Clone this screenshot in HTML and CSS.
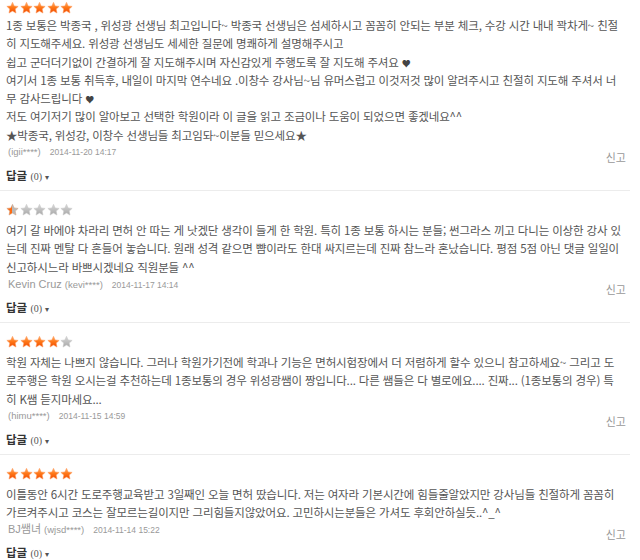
FILE: index.html
```html
<!DOCTYPE html>
<html lang="ko">
<head>
    <meta charset="UTF-8">
    <title>수강후기</title>
    <link rel="stylesheet" href="styles.css">
</head>
<body>
    <svg class="defs" width="0" height="0">
        <defs>
            <linearGradient id="gOn" x1="0" y1="0" x2="0" y2="1">
                <stop offset="0" stop-color="#ffb070"/>
                <stop offset="0.45" stop-color="#ff7a1a"/>
                <stop offset="1" stop-color="#f04a00"/>
            </linearGradient>
            <linearGradient id="gOff" x1="0" y1="0" x2="0" y2="1">
                <stop offset="0" stop-color="#d8d8d8"/>
                <stop offset="1" stop-color="#a8a8a8"/>
            </linearGradient>
            <linearGradient id="gHalf" x1="0" y1="0" x2="1" y2="0">
                <stop offset="0.5" stop-color="#ff6a10"/>
                <stop offset="0.5" stop-color="#b8b8b8"/>
            </linearGradient>
            <symbol id="star" viewBox="0 0 20 20">
                <path d="M10 1.2l2.6 5.6 6.1.7-4.5 4.2 1.2 6.1L10 14.8l-5.4 3 1.2-6.1-4.5-4.2 6.1-.7z" stroke-linejoin="round"/>
            </symbol>
        </defs>
    </svg>

    <div class="review-list">
        <div class="review">
            <div class="stars">
                <svg class="star on"><use href="#star"/></svg><svg class="star on"><use href="#star"/></svg><svg class="star on"><use href="#star"/></svg><svg class="star on"><use href="#star"/></svg><svg class="star on"><use href="#star"/></svg>
            </div>
            <div class="content">1종 보통은 박종국 , 위성광 선생님 최고입니다~ 박종국 선생님은 섬세하시고 꼼꼼히 안되는 부분 체크, 수강 시간 내내 꽉차게~ 친절히 지도해주세요. 위성광 선생님도 세세한 질문에 명쾌하게 설명해주시고<br>쉽고 군더더기없이 간결하게 잘 지도해주시며 자신감있게 주행도록 잘 지도해 주셔요 <span class="heart">♥</span><br>여기서 1종 보통 취득후, 내일이 마지막 연수네요 .이창수 강사님~님 유머스럽고 이것저것 많이 알려주시고 친절히 지도해 주셔서 너무 감사드립니다 <span class="heart">♥</span><br>저도 여기저기 많이 알아보고 선택한 학원이라 이 글을 읽고 조금이나 도움이 되었으면 좋겠네요^^<br>★박종국, 위성강, 이창수 선생님들 최고임돠~이분들 믿으세요★</div>
            <div class="meta-row">
                <div class="meta"><span class="uid">(igii****)</span><span class="date">2014-11-20 14:17</span></div>
                <a class="report">신고</a>
            </div>
            <div class="reply"><b>답글</b> <span class="count">(0)</span> <span class="caret">▾</span></div>
        </div>

        <div class="review">
            <div class="stars">
                <svg class="star half"><use href="#star"/></svg><svg class="star off"><use href="#star"/></svg><svg class="star off"><use href="#star"/></svg><svg class="star off"><use href="#star"/></svg><svg class="star off"><use href="#star"/></svg>
            </div>
            <div class="content">여기 갈 바에야 차라리 면허 안 따는 게 낫겠단 생각이 들게 한 학원. 특히 1종 보통 하시는 분들; 썬그라스 끼고 다니는 이상한 강사 있는데 진짜 멘탈 다 흔들어 놓습니다. 원래 성격 같으면 뺨이라도 한대 싸지르는데 진짜 참느라 혼났습니다. 평점 5점 아닌 댓글 일일이 신고하시느라 바쁘시겠네요 직원분들 ^^</div>
            <div class="meta-row">
                <div class="meta"><span class="name">Kevin Cruz</span><span class="uid">(kevi****)</span><span class="date">2014-11-17 14:14</span></div>
                <a class="report">신고</a>
            </div>
            <div class="reply"><b>답글</b> <span class="count">(0)</span> <span class="caret">▾</span></div>
        </div>

        <div class="review">
            <div class="stars">
                <svg class="star on"><use href="#star"/></svg><svg class="star on"><use href="#star"/></svg><svg class="star on"><use href="#star"/></svg><svg class="star on"><use href="#star"/></svg><svg class="star off"><use href="#star"/></svg>
            </div>
            <div class="content">학원 자체는 나쁘지 않습니다. 그러나 학원가기전에 학과나 기능은 면허시험장에서 더 저렴하게 할수 있으니 참고하세요~ 그리고 도로주행은 학원 오시는걸 추천하는데 1종보통의 경우 위성광쌤이 짱입니다... 다른 쌤들은 다 별로에요.... 진짜... (1종보통의 경우) 특히 K쌤 듣지마세요...</div>
            <div class="meta-row">
                <div class="meta"><span class="uid">(himu****)</span><span class="date">2014-11-15 14:59</span></div>
                <a class="report">신고</a>
            </div>
            <div class="reply"><b>답글</b> <span class="count">(0)</span> <span class="caret">▾</span></div>
        </div>

        <div class="review">
            <div class="stars">
                <svg class="star on"><use href="#star"/></svg><svg class="star on"><use href="#star"/></svg><svg class="star on"><use href="#star"/></svg><svg class="star on"><use href="#star"/></svg><svg class="star on"><use href="#star"/></svg>
            </div>
            <div class="content">이틀동안 6시간 도로주행교육받고 3일째인 오늘 면허 땄습니다. 저는 여자라 기본시간에 힘들줄알았지만 강사님들 친절하게 꼼꼼히 가르켜주시고 코스는 잘모르는길이지만 그리힘들지않았어요. 고민하시는분들은 가셔도 후회안하실듯..^_^</div>
            <div class="meta-row">
                <div class="meta"><span class="name">BJ쌤녀</span><span class="uid">(wjsd****)</span><span class="date">2014-11-14 15:22</span></div>
                <a class="report">신고</a>
            </div>
            <div class="reply"><b>답글</b> <span class="count">(0)</span> <span class="caret">▾</span></div>
        </div>
    </div>
</body>
</html>
```

FILE: styles.css
```css
body {
    margin: 0;
    padding: 0;
    background-color: #fff;
    font-family: 'Noto Sans CJK KR', 'Liberation Sans', sans-serif;
    color: #555;
}

.defs {
    position: absolute;
    width: 0;
    height: 0;
}

.review-list {
    width: 630px;
}

.review {
    padding: 12px 6px 5px 6px;
    border-bottom: 1px solid #ececec;
}

.review:first-child {
    padding-top: 1px;
}

.stars {
    display: flex;
    gap: 0.5px;
    height: 14px;
}

.star {
    width: 13px;
    height: 14px;
}

.star.on {
    fill: url(#gOn);
    stroke: #ff9b5c;
    stroke-width: 0.8;
}

.star.off {
    fill: url(#gOff);
    stroke: #c8c8c8;
    stroke-width: 0.8;
}

.star.half {
    fill: url(#gHalf);
    stroke: #d0a080;
    stroke-width: 0.8;
}

.content {
    font-size: 11.5px;
    line-height: 18.3px;
    letter-spacing: -0.15px;
    color: #555;
    word-break: break-all;
    margin-top: 4px;
}

.review:first-child .content {
    margin-top: 1px;
}

.heart {
    font-size: 9px;
    line-height: 0;
    color: #444;
}

.meta-row {
    display: flex;
    justify-content: space-between;
    align-items: flex-start;
    height: 19px;
}

.meta {
    color: #999;
    font-size: 9px;
    line-height: 16px;
    padding-left: 2px;
}

.meta .name {
    font-family: 'Liberation Sans', 'Noto Sans CJK KR', sans-serif;
    font-size: 11px;
    margin-right: 3px;
}

.meta .uid {
    font-family: 'Liberation Sans', sans-serif;
    font-size: 9.5px;
    margin-right: 9px;
}

.meta .date {
    font-family: 'Liberation Sans', sans-serif;
    font-size: 8.5px;
}

.report {
    font-size: 11px;
    color: #999;
    margin-top: 5px;
    margin-right: -2px;
}

.reply {
    margin-top: 4px;
    font-size: 11.5px;
    line-height: 16px;
    color: #333;
}

.reply b {
    font-weight: bold;
}

.reply .count {
    font-family: 'Liberation Serif', serif;
    font-size: 10px;
    color: #555;
}

.reply .caret {
    font-size: 8px;
    color: #555;
}
```
